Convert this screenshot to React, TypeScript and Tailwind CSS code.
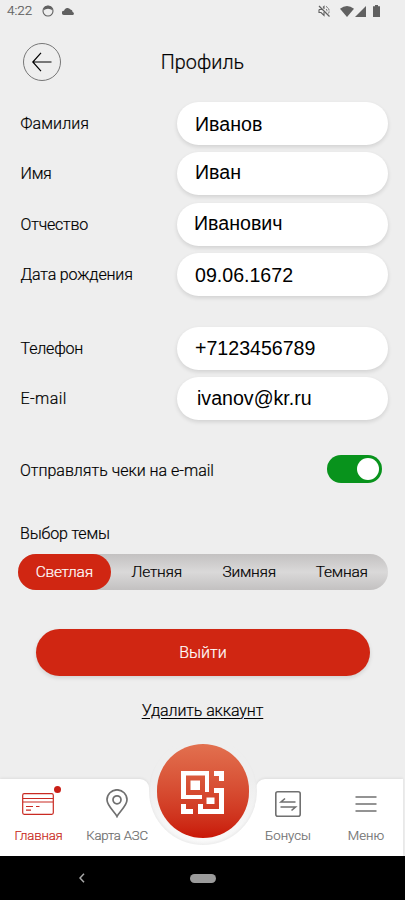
import { useState } from 'react'
import clsx from 'clsx'

interface Field {
  label: string
  value: string
  labelClass: string
  valueClass: string
}

const personal: Field[] = [
  { label: 'Фамилия', value: 'Иванов', labelClass: 'tracking-[0.1px]', valueClass: 'pl-[18px] pt-[2px]' },
  { label: 'Имя', value: 'Иван', labelClass: 'tracking-[-0.3px]', valueClass: 'pl-[18px] pb-[3px]' },
  { label: 'Отчество', value: 'Иванович', labelClass: 'tracking-[-0.2px]', valueClass: 'pl-[17px] pb-px' },
  { label: 'Дата рождения', value: '09.06.1672', labelClass: 'tracking-[-0.15px]', valueClass: 'pl-[18px] pt-[2px]' },
]

const contacts: Field[] = [
  { label: 'Телефон', value: '+7123456789', labelClass: 'tracking-[-0.2px]', valueClass: 'pl-[18px] pt-px' },
  { label: 'E-mail', value: 'ivanov@kr.ru', labelClass: 'tracking-[0.4px]', valueClass: 'pl-[20px]' },
]

const themes = ['Светлая', 'Летняя', 'Зимняя', 'Темная']

function StatusBar() {
  return (
    <div className="flex h-[22px] items-center justify-between pl-[7px] pr-[25px] text-[#606060]">
      <div className="flex items-center">
        <span className="w-[35px] text-[13.5px] leading-none">4:22</span>
        <svg width="12" height="12" viewBox="0 0 12 12" className="mr-[8px]">
          <circle cx="6" cy="6" r="5" fill="none" stroke="currentColor" strokeWidth="1.1" />
          <path d="M2 2.2Q6-.5 10 2.2L9.8 5.2 8.5 4.2Q6 3.5 3.5 4.2L2.2 5.2Z" fill="currentColor" />
        </svg>
        <svg width="13" height="8" viewBox="0 0 13 8" fill="currentColor">
          <path d="M2 8a2 2 0 0 1 0-4.3A3.6 3.6 0 0 1 8.5 2.5 2.6 2.6 0 0 1 10.6 5 1.6 1.6 0 0 1 11 8Z" />
        </svg>
      </div>
      <div className="flex items-center">
        <svg width="12" height="12" viewBox="0 0 12 12" fill="none" stroke="currentColor" className="mr-[10px]">
          <path d="M1 1 11.5 11.5" strokeWidth="1.3" />
          <path d="M1 4.5v3h2l3 3V7M1 4.5h3M6 4V1.5L5 2.5" strokeWidth="1.1" />
          <path d="M8 1.5a5 5 0 0 1 2.5 7M8 4a2.5 2.5 0 0 1 .8 3" strokeWidth="1" strokeDasharray="2 1" />
        </svg>
        <svg width="14" height="11" viewBox="0 0 14 11" fill="currentColor" className="mr-[1px]">
          <path d="M0 2.8Q7-2.6 14 2.8L7 11Z" />
        </svg>
        <svg width="11" height="11" viewBox="0 0 11 11" fill="currentColor" className="mr-[7px]">
          <path d="M11 0V11H0Z" />
        </svg>
        <svg width="7" height="12" viewBox="0 0 7 12" fill="currentColor">
          <path d="M2 0h3v1.2h2V12H0V1.2h2Z" />
        </svg>
      </div>
    </div>
  )
}

function FieldRow({ field }: { field: Field }) {
  return (
    <div className="flex h-[43px] items-center">
      <span className={clsx('w-[157px] pl-[0.6px] pt-px text-[16px]', field.labelClass)}>{field.label}</span>
      <div
        className={clsx(
          'flex h-full w-[211px] items-center rounded-full bg-white font-["Liberation_Sans",sans-serif] text-[19.6px] font-normal shadow-[0_2px_4px_rgba(0,0,0,0.12)] [-webkit-text-stroke:0px]',
          field.valueClass,
        )}
      >
        {field.value}
      </div>
    </div>
  )
}

function CardIcon() {
  return (
    <svg width="32" height="22" viewBox="0 0 32 22" fill="none" stroke="#c92a22" strokeWidth="1.2">
      <rect x="0.7" y="0.7" width="30.6" height="20.6" rx="1.5" />
      <path d="M1 5.5h30M1 9h30" />
      <path d="M4 13.5h7M14 13.5h3.5M4 17.2h5" />
    </svg>
  )
}

function PinIcon() {
  return (
    <svg width="22" height="29" viewBox="0 0 22 29" fill="none" stroke="#707070" strokeWidth="1.7">
      <path d="M11 27.5C9 23 1 17 1 10.8a10 10 0 0 1 20 0C21 17 13 23 11 27.5Z" />
      <circle cx="11" cy="10.8" r="4" />
    </svg>
  )
}

function BonusIcon() {
  return (
    <svg width="26" height="26" viewBox="0 0 26 26" fill="none" stroke="#707070" strokeWidth="1.6">
      <rect x="0.8" y="0.8" width="24.4" height="24.4" rx="2" />
      <path d="M20.5 11H6l4-3.5M5.5 16H20.5l-4 3.5" />
    </svg>
  )
}

function MenuIcon() {
  return (
    <svg width="22" height="16" viewBox="0 0 22 16" stroke="#707070" strokeWidth="1.7">
      <path d="M0.5 1h21M0.5 8h21M0.5 15h21" />
    </svg>
  )
}

function QrIcon() {
  return (
    <svg width="44" height="44" viewBox="0 0 44 44" fill="#fff">
      <path fillRule="evenodd" d="M0 0H28V21H24V4.5H5V24H21V28H0Z" />
      <path d="M9.5 9.5h9.5v9.5H9.5Z" />
      <path d="M33 0h10v10h-5V5h-5Z" />
      <path d="M33 17h10v26H17V33h5v5h16V22h-5Z" />
      <path d="M25.5 26.5h8v6.5h-8Z" />
      <path d="M0 33h5v5h7v5H0Z" />
    </svg>
  )
}

function BottomNav() {
  return (
    <nav className="relative flex h-[77px] text-[13.2px] leading-none text-[#707070]">
      <div className="flex w-[149px] rounded-tr-[9px] bg-white shadow-[0_-1px_3px_rgba(0,0,0,0.07)]">
        <div className="relative flex w-[77px] shrink-0 flex-col items-center text-[#c92a22]">
          <div className="flex h-[49px] items-center pr-px"><CardIcon /></div>
          <span className="pt-px tracking-[-0.15px]">Главная</span>
          <i className="absolute left-[54px] top-[7px] size-[7px] rounded-full bg-[#c91f17]" />
        </div>
        <div className="z-10 flex w-[80px] shrink-0 flex-col items-center">
          <div className="flex h-[49px] items-center"><PinIcon /></div>
          <span className="pt-px tracking-[-0.2px]">Карта АЗС</span>
        </div>
      </div>
      <div className="w-[107px] bg-white [clip-path:inset(13px_0_0_0)]" />
      <div className="flex w-[147px] rounded-tl-[9px] bg-white shadow-[0_-1px_3px_rgba(0,0,0,0.07)]">
        <div className="z-10 flex w-[64px] shrink-0 flex-col items-center">
          <div className="flex h-[49px] items-center"><BonusIcon /></div>
          <span className="pt-px">Бонусы</span>
        </div>
        <div className="flex w-[92px] shrink-0 flex-col items-center">
          <div className="flex h-[49px] items-center"><MenuIcon /></div>
          <span className="pt-px">Меню</span>
        </div>
      </div>
      <div className="absolute left-[149px] top-[-42px] flex size-[108px] items-center justify-center rounded-full bg-linear-to-b from-[#eeeeee] from-40% to-[#fafafa] shadow-[inset_0_-2px_3px_rgba(0,0,0,0.05)]">
        <button className="flex h-[94px] w-[92px] items-center justify-center rounded-full bg-linear-to-b from-[#e2704f] to-[#c91606] pt-[3px]">
          <QrIcon />
        </button>
      </div>
    </nav>
  )
}

export default function App() {
  const [theme, setTheme] = useState('Светлая')
  const [sendReceipts, setSendReceipts] = useState(true)

  return (
    <div className="flex h-[900px] w-[405px] flex-col overflow-hidden bg-[#eeeeee] font-[Roboto,sans-serif] font-light text-black [-webkit-text-stroke:0.2px]">
      <StatusBar />
      <header className="grid h-[80px] grid-cols-[1fr_auto_1fr] items-center px-[23px]">
        <button className="flex size-[38px] items-center justify-center rounded-full border border-[#777]">
          <svg width="20" height="20" viewBox="0 0 20 20" fill="none" stroke="#000" strokeWidth="1.2">
            <path d="M19.5 10H1M9 .8.8 10 9 19.2" />
          </svg>
        </button>
        <h1 className="pt-px text-[19.8px]">Профиль</h1>
      </header>

      <main className="flex flex-1 flex-col">
        <div className="flex flex-col gap-[7.3px] pl-[20px]">
          {personal.map((field) => (
            <FieldRow key={field.label} field={field} />
          ))}
        </div>
        <div className="mt-[31px] flex flex-col gap-[7px] pl-[20px]">
          {contacts.map((field) => (
            <FieldRow key={field.label} field={field} />
          ))}
        </div>

        <div className="mt-[35px] flex h-[28px] items-center justify-between pl-[20px] pr-[23px]">
          <span className="pt-[4px] text-[16px]">Отправлять чеки на e-mail</span>
          <button
            onClick={() => setSendReceipts(!sendReceipts)}
            className={clsx(
              'flex h-[28px] w-[55px] items-center rounded-full px-[3px]',
              sendReceipts ? 'justify-end bg-[#08931c]' : 'justify-start bg-[#aaaaaa]',
            )}
          >
            <span className="size-[22px] rounded-full bg-white" />
          </button>
        </div>

        <h2 className="mt-[39px] pl-[20px] text-[16px] leading-6 tracking-[-0.15px]">Выбор темы</h2>
        <div className="ml-[18px] mt-[8px] flex h-[36px] w-[370px] rounded-full bg-linear-to-b from-[#c3c1c1] via-[#dad9d9] to-[#c3c1c1]">
          {themes.map((name) => (
            <button
              key={name}
              onClick={() => setTheme(name)}
              className={clsx(
                'flex-1 rounded-full pt-[2px] text-[15.5px] tracking-[-0.25px]',
                theme === name && 'bg-[#d02612] text-white',
              )}
            >
              {name}
            </button>
          ))}
        </div>

        <button className="ml-[36px] mt-[39px] h-[47px] w-[334px] rounded-full bg-[#d02612] pt-px text-[16px] text-white shadow-[0_2px_4px_rgba(0,0,0,0.12)]">
          Выйти
        </button>
        <a className="mt-[23px] self-center text-[16px] tracking-[-0.1px] underline decoration-1 underline-offset-2">Удалить аккаунт</a>
      </main>

      <BottomNav />
      <div className="flex h-[44px] items-center bg-black">
        <svg width="6" height="10" viewBox="0 0 6 10" fill="none" stroke="#aaa" strokeWidth="1.5" className="ml-[79px]">
          <path d="M5 .8 1 5l4 4.2" />
        </svg>
        <div className="ml-[105px] h-[9px] w-[26px] rounded-full bg-[#9b9b9b]" />
      </div>
    </div>
  )
}
